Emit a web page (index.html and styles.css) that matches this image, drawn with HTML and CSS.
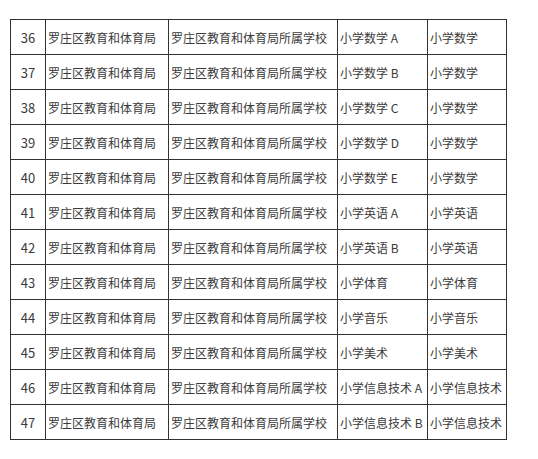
FILE: index.html
```html
<!DOCTYPE html>
<html lang="zh-CN">
<head>
<meta charset="utf-8">
<link rel="stylesheet" href="styles.css">
</head>
<body>
<table class="grid">
  <colgroup>
    <col class="c-num"><col class="c-org"><col class="c-school"><col class="c-post"><col class="c-subj">
  </colgroup>
  <tbody>
    <tr><td class="num">36</td><td>罗庄区教育和体育局</td><td>罗庄区教育和体育局所属学校</td><td>小学数学 A</td><td>小学数学</td></tr>
    <tr><td class="num">37</td><td>罗庄区教育和体育局</td><td>罗庄区教育和体育局所属学校</td><td>小学数学 B</td><td>小学数学</td></tr>
    <tr><td class="num">38</td><td>罗庄区教育和体育局</td><td>罗庄区教育和体育局所属学校</td><td>小学数学 C</td><td>小学数学</td></tr>
    <tr><td class="num">39</td><td>罗庄区教育和体育局</td><td>罗庄区教育和体育局所属学校</td><td>小学数学 D</td><td>小学数学</td></tr>
    <tr><td class="num">40</td><td>罗庄区教育和体育局</td><td>罗庄区教育和体育局所属学校</td><td>小学数学 E</td><td>小学数学</td></tr>
    <tr><td class="num">41</td><td>罗庄区教育和体育局</td><td>罗庄区教育和体育局所属学校</td><td>小学英语 A</td><td>小学英语</td></tr>
    <tr><td class="num">42</td><td>罗庄区教育和体育局</td><td>罗庄区教育和体育局所属学校</td><td>小学英语 B</td><td>小学英语</td></tr>
    <tr><td class="num">43</td><td>罗庄区教育和体育局</td><td>罗庄区教育和体育局所属学校</td><td>小学体育</td><td>小学体育</td></tr>
    <tr><td class="num">44</td><td>罗庄区教育和体育局</td><td>罗庄区教育和体育局所属学校</td><td>小学音乐</td><td>小学音乐</td></tr>
    <tr><td class="num">45</td><td>罗庄区教育和体育局</td><td>罗庄区教育和体育局所属学校</td><td>小学美术</td><td>小学美术</td></tr>
    <tr><td class="num">46</td><td>罗庄区教育和体育局</td><td>罗庄区教育和体育局所属学校</td><td>小学信息技术 A</td><td>小学信息技术</td></tr>
    <tr><td class="num">47</td><td>罗庄区教育和体育局</td><td>罗庄区教育和体育局所属学校</td><td>小学信息技术 B</td><td>小学信息技术</td></tr>
  </tbody>
</table>
</body>
</html>
```

FILE: styles.css
```css
html, body {
  background: #ffffff;
}
body {
  margin: 19px 0 0 10px;
  font-family: "Noto Sans CJK SC", "Noto Sans", sans-serif;
  font-size: 12px;
  color: #3a3a3a;
}
.grid {
  border-collapse: collapse;
  table-layout: fixed;
  width: 496px;
}
.c-num { width: 35px; }
.c-org { width: 123px; }
.c-school { width: 169px; }
.c-post { width: 90px; }
.c-subj { width: 79px; }
.grid td {
  border: 1px solid #333333;
  height: 35px;
  padding: 2px 0 0 2px;
  white-space: nowrap;
  overflow: hidden;
  vertical-align: middle;
  line-height: 16px;
  box-sizing: border-box;
}
.grid td.num {
  text-align: center;
  padding-left: 0;
  font-size: 13px;
}
```
